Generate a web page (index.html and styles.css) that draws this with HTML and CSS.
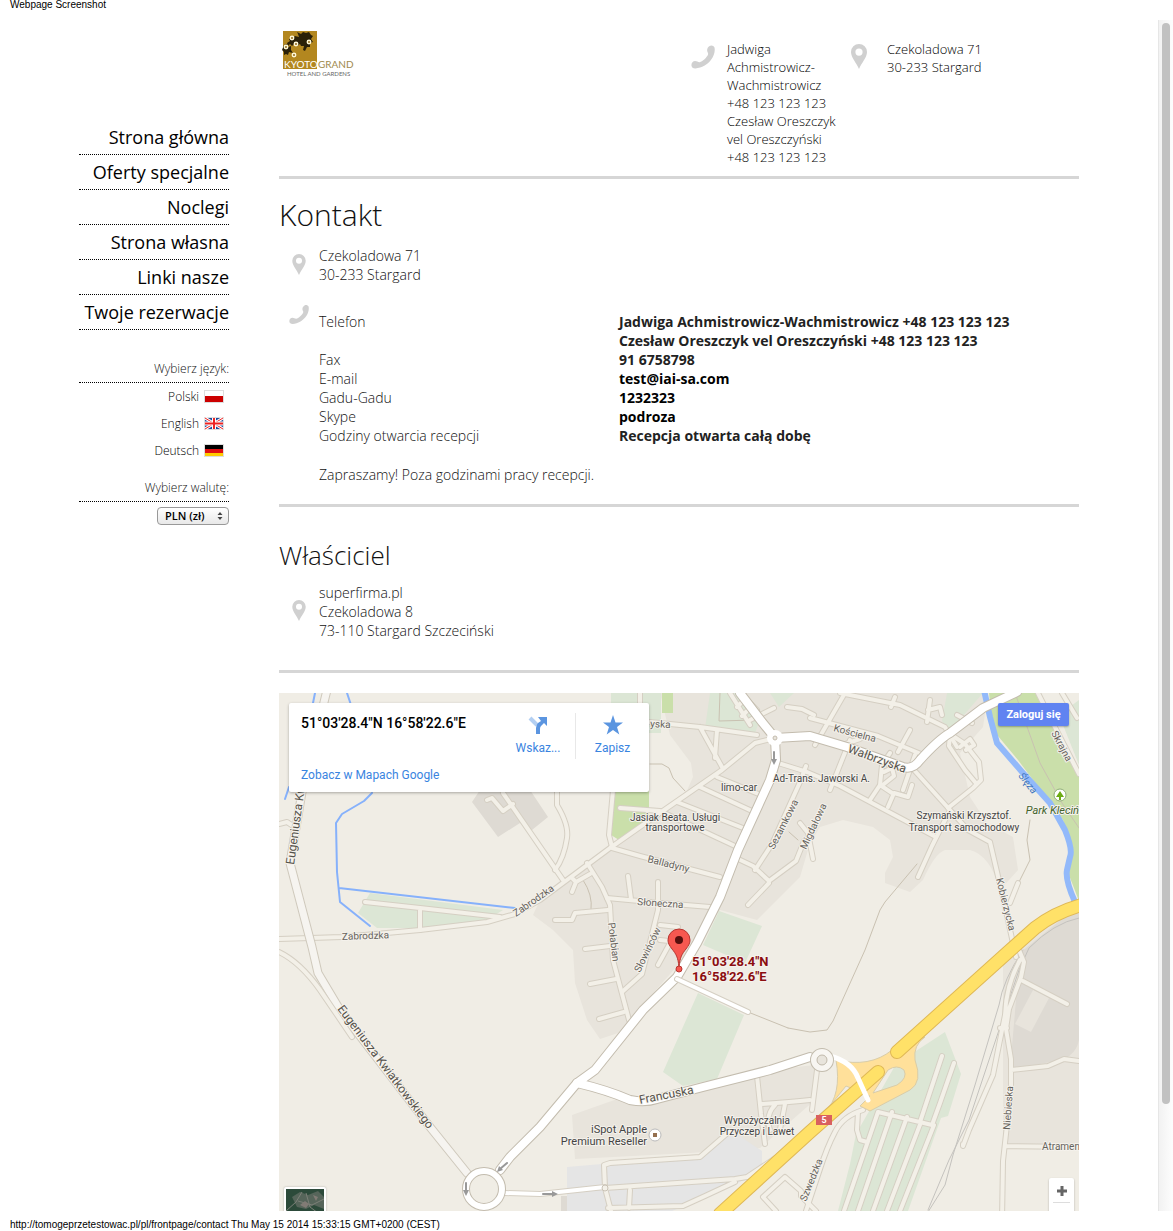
FILE: index.html
```html
<!DOCTYPE html>
<html lang="pl">

<head>
    <meta charset="utf-8">
    <title>Webpage Screenshot</title>
    <link rel="stylesheet" href="styles.css">
</head>

<body>
    <svg class="sprites" width="0" height="0">
        <symbol id="icon-phone" viewBox="0 0 24 24">
            <path d="M18.6 1.1c1.4-1.2 4.2-.5 4.9 1.400.8 3.500-.3 8.500-3.600 12.600-3.500 4.500-9 7.900-15.400 8.400-2.200.1-4.100-1.200-4.100-3.300 0-2.400 1.600-4.100 3.700-4.200 1.900 0 2.900 1.300 4.600 1.200 2.400-.3 7.700-5.100 8.400-7.900.3-1.400-1-2.200-1-4 0-1.700 1-3.200 2.500-4.200z" />
        </symbol>
        <symbol id="icon-pin" viewBox="0 0 16 25">
            <path fill-rule="evenodd" d="M8 0a8 8 0 0 1 8 8c0 5.500-5.500 11-8 17C5.500 19 0 13.500 0 8a8 8 0 0 1 8-8zm0 4.500a3.600 3.600 0 1 0 0 7.200 3.600 3.600 0 0 0 0-7.200z" />
        </symbol>
    </svg>

    <div class="print-title">Webpage Screenshot</div>

    <div class="frame">
        <div class="page">
            <div class="sidebar">
                <nav class="menu">
                    <a href="#">Strona główna</a>
                    <a href="#">Oferty specjalne</a>
                    <a href="#">Noclegi</a>
                    <a href="#">Strona własna</a>
                    <a href="#">Linki nasze</a>
                    <a href="#">Twoje rezerwacje</a>
                </nav>

                <div class="side-title">Wybierz język:</div>
                <div class="langs">
                    <a href="#">Polski
                        <svg class="flag" viewBox="0 0 20 13">
                            <rect width="20" height="13" fill="#ddd" />
                            <rect x="1" y="1" width="18" height="5" fill="#fff" />
                            <rect x="1" y="6" width="18" height="6" fill="#c00" />
                        </svg>
                    </a>
                    <a href="#">English
                        <svg class="flag" viewBox="0 0 20 13">
                            <rect width="20" height="13" fill="#ddd" />
                            <rect x="1" y="1" width="18" height="11" fill="#1c4a9c" />
                            <path d="M1 1l18 11M19 1L1 12" stroke="#fff" stroke-width="3" />
                            <path d="M1 1l18 11M19 1L1 12" stroke="#e22" stroke-width="1" />
                            <path d="M10 1v11M1 6.500h18" stroke="#fff" stroke-width="4" />
                            <path d="M10 1v11M1 6.500h18" stroke="#e22" stroke-width="2" />
                        </svg>
                    </a>
                    <a href="#">Deutsch
                        <svg class="flag" viewBox="0 0 20 13">
                            <rect width="20" height="13" fill="#ddd" />
                            <rect x="1" y="1" width="18" height="4" fill="#000" />
                            <rect x="1" y="5" width="18" height="4" fill="#e01010" />
                            <rect x="1" y="9" width="18" height="3" fill="#fc0" />
                        </svg>
                    </a>
                </div>

                <label class="side-title" for="currency">Wybierz walutę:</label>
                <div class="currency">
                    <select id="currency">
                        <option>PLN (zł)</option>
                        <option>EUR (€)</option>
                    </select>
                    <svg class="arrows" viewBox="0 0 6 8">
                        <path d="M3 0l2.500 3h-5zM3 8l2.500-3h-5z" />
                    </svg>
                </div>
            </div>

            <main class="content">
                <header class="top">
                    <a href="#" class="logo">
                        <svg viewBox="0 0 76 54">
                            <rect x="4" y="1" width="34" height="38" fill="#b3871f" />
                            <g fill="#2a2008">
                                <path d="M18 2l4 2 2-2 3 1 3-1 2 3 2 1-2 3 2 3-3 1 0 4-3 0-2 4-2-1 1-4-3 0-1-2-3 2-2-3-3 3-2-2-2 2-1-3 3-2-1-2 4-1 2-2 4 1-1-3z" />
                                <path d="M5 15l3-1 1 3 3-1 0 4 2 3-4-1-1 3-2-1-2 1 0-3-2-2z" />
                            </g>
                            <g fill="#8a6414" stroke="#fff8d8" stroke-width="1.500">
                                <circle cx="13" cy="8" r="1.700" />
                                <circle cx="30" cy="12" r="1.700" />
                                <circle cx="17" cy="14" r="1.700" />
                                <circle cx="7" cy="17" r="1.700" />
                                <circle cx="15" cy="25" r="1.700" />
                            </g>
                            <text x="5" y="38" class="logo-name" fill="#fff">KYOTO</text>
                            <text x="39" y="38" class="logo-name" fill="#a08a4c">GRAND</text>
                            <text x="8" y="46" class="logo-sub">HOTEL AND GARDENS</text>
                        </svg>
                    </a>
                    <div class="top-phone">
                        <svg class="icon"><use href="#icon-phone" /></svg>
                        <div>Jadwiga Achmistrowicz-Wachmistrowicz<br>+48 123 123 123<br>Czesław Oreszczyk vel Oreszczyński<br>+48 123 123 123</div>
                    </div>
                    <div class="top-address">
                        <svg class="icon"><use href="#icon-pin" /></svg>
                        <div>Czekoladowa 71<br>30-233 Stargard</div>
                    </div>
                </header>

                <section class="contact">
                    <h1>Kontakt</h1>
                    <div class="row">
                        <svg class="icon icon-pin"><use href="#icon-pin" /></svg>
                        <div>Czekoladowa 71<br>30-233 Stargard</div>
                    </div>
                    <div class="row details">
                        <svg class="icon icon-phone"><use href="#icon-phone" /></svg>
                        <div class="details-body">
                            <table>
                                <tr>
                                    <th>Telefon</th>
                                    <td>Jadwiga Achmistrowicz-Wachmistrowicz +48 123 123 123<br>Czesław Oreszczyk vel Oreszczyński +48 123 123 123</td>
                                </tr>
                                <tr>
                                    <th>Fax</th>
                                    <td>91 6758798</td>
                                </tr>
                                <tr>
                                    <th>E-mail</th>
                                    <td><a href="#">test@iai-sa.com</a></td>
                                </tr>
                                <tr>
                                    <th>Gadu-Gadu</th>
                                    <td><a href="#">1232323</a></td>
                                </tr>
                                <tr>
                                    <th>Skype</th>
                                    <td><a href="#">podroza</a></td>
                                </tr>
                                <tr>
                                    <th>Godziny otwarcia recepcji</th>
                                    <td>Recepcja otwarta całą dobę</td>
                                </tr>
                            </table>
                            <p>Zapraszamy! Poza godzinami pracy recepcji.</p>
                        </div>
                    </div>
                </section>

                <section class="owner">
                    <h2>Właściciel</h2>
                    <div class="row">
                        <svg class="icon icon-pin"><use href="#icon-pin" /></svg>
                        <div>superfirma.pl<br>Czekoladowa 8<br>73-110 Stargard Szczeciński</div>
                    </div>
                </section>

                <div class="map">
                    <svg class="map-canvas" viewBox="279 693 800 518" preserveAspectRatio="xMinYMin slice">
                        <defs>
                            <g id="minor">
                                <path d="M279 939L342 937 420 930 487 922 515 914 540 900 610 848 657 815 722 770 755 743 775 738" />
                                <path d="M365 902L420 908 500 917M420 908V930" />
                                <path d="M487 800l5-2 11 13 10-7M503 793L563 880" />
                                <path d="M279 824l8-2 6 4" />
                                <path d="M557 790v15q12 20 10 33-3 20-12 32M613 790l-4 45 3 12" />
                                <path d="M650 722L700 727 757 735M700 727l22 40M717 730l-2 28M640 693v20" />
                                <path d="M717 777l44 18M700 787l52 24M677 802l66 26M620 808l40 3 75 35M612 848L640 856 720 877" />
                                <path d="M587 863l15 24 8 18 3 55 16 60" />
                                <path d="M590 874l-14 8-4 10M576 882l-3-3M628 876l3 23M658 882v28l-6 24-10 40-20 18M607 898l43 4 60 5M608 910l-33 3-3 7h-17M660 925l18 2M585 949l25-3M590 984l26-5M599 1019l25-7M660 940l18 2M658 965l12-22" />
                                <path d="M736 858l17 8 16 15 27-20 8-20M769 883l-21 22M755 870l17-26 28-62 6-16M775 762l32 10 33 14 94 50M800 823l8 10 5 26" />
                                <path d="M730 693l20 32M737 690l20 20M750 720l24-12M742 702l-5 5M747 711l-5 5M787 707l15 2 12 6" />
                                <path d="M840 693l60 12 45 22 12 20M895 697l-4 10M845 693l-30 52M810 718l68 18 43 18M910 730l-12 22M930 700l-3 22M928 710l12-3 2 8M957 715l15 8M830 790l20-50M842 745l18-6" />
                                <path d="M870 800l10-15 2-20 8-12M888 807l6-14 14 4 4-12M880 785l12 8M884 784l10-8-2-8-8 4M903 790l12-35M914 770l18 20 18 20 18 20 22 12 14 60 12 55M950 810l-18 36-14 31M948 808l25-20 8-8-2-18-14-18-15-10-1 12 16 24 10 12M960 747l10-8 4 6-8 5M1018 883l-8 20" />
                                <path d="M1038 693l18 36 23 45M1062 693l15 25" />
                                <path d="M1019 950l5 12-3 15-12 32-3 20 5 30v30l-8 72-1 60M1020 960q-14 25-15 55l-12 60-24 55-6 16V1144M1023 981l44 23M1011 1070l37-4 16-7 15 2M1000 1028h7M1006 1146l73 1" />
                                <path d="M844 1211L878 1112 932 1125M892 1112l-34 99M907 1117l-34 94M921 1122l-34 89M934 1125l-34 86M920 1122l22-66M932 1125l8-22 14-40M863 1110q-20 6-28 22-8 15-16 40l-13 39M858 1112l-1 18 3 10 7 2" />
                                <path d="M757 1076l4 38 4 30M605 1188l-1-23 6-2 90-6 30-26M605 1188l130-9 12-2 30-20 55-50M735 1182l-30 14-22 10-75 2M605 1188l6 23M630 1190l-1 18M762 1104q30-2 48-4M770 1130q-5-15 5-25M785 1104l-5 25M817 1070l-5 40" />
                                <path d="M816 1211l-15-15 0-5-16-14-22 20 13 14" />
                            </g>
                            <g id="mid">
                                <path d="M327 690L302 792 290 863 312 947 318 973 340 1010 430 1127 467 1173" />
                            </g>
                            <g id="major">
                                <path d="M740 693L762 722 775 738 810 736 847 747 903 767Q913 770 920 760 938 740 950 733L983 708 1017 692" />
                                <path d="M775 738l1 22-6 20-32 70-18 47-23 46-20 34-34 33-48 60-18 13-37 44-30 30-10 13" />
                                <path d="M577 1083q30 7 53 17 15 3 27-1l46-12 67-17 40-13" />
                            </g>
                        </defs>

                        <rect class="land" x="279" y="693" width="800" height="518" />
                        <path class="urban" d="M660 693L670 735 691 763 693 777 685 795 610 848 540 900 533 915 553 930 573 950 575 983 587 1020 600 1039 618 1033 678 965 720 910 757 920 800 877 810 843 820 827 843 820 873 827 890 840 893 857 885 873 885 883 910 892 923 880Q935 853 945 850H970Q990 855 1000 890L1018 870 1013 837 987 823 970 797 960 753 983 727 988 693z" />
                        <path class="urban" d="M572 1115L620 1098 657 1100 770 1070 815 1065 815 1100 760 1148 690 1153 575 1159zM1003 950L1079 905V1147H1003z" />
                        <path class="block" d="M472 802L498 837 520 823 532 830 548 817 530 790H480zM1010 1070L1020 953 1079 905V1040Q1075 1060 1050 1062zM561 1211v-15h30v15z" />
                        <path class="urban" d="M1033 990l16 8-18 34-16-8z" />
                        <path class="lot" d="M567 1167l70-6 65-5 30-25 30 20v20l-30 15-60 25H567z" />
                        <path class="grass" d="M370 893L503 910 487 920 420 928 377 928 358 913zM611 693h50v40h-50zM710 693h28l20 32-3 8-50-5zM770 693h24l-15 14zM719 911l43 15-17 37-42-18zM698 993l46 22-27 64-34 7-20-14z M947 693h36l-33 38-8-10zM945 1032l16 42-13 42-7 2-33 93h-70l12-47 6-30 40-70z" />
                        <path class="grass" d="M1079 700l-20 15 20 50z" />
                        <path class="park" d="M989 693h51l39 80v128L1067 870l4-20-8-30-45-60-25-30zM615 790h34v30l-30 20-8-5zM662 693h11v20h-11z" />
                        <path class="path" d="M650 764h12l7 4 4 10 12 13M788 1028l-40-16M788 1028l22 4 17-2 6-9 32-71 15-40 5-8 32-38M1030 820l-3 20 3 20-15 30M583 880q10 15 8 30M789 832l9 8M1015 693l25 70 22 40 17 25M720 693l-1 28 35-1" />
                        <path class="rail" d="M1023 950q-20 30-24 55l-24 80-22 70-8 30-17 27M1079 918q-25 5-50 30l-10 22-30 90-20 60-20 40-21 50" />
                        <path class="water thin" d="M315 693l-2 10M289 787l-4 12M347 693l4 12M372 793L364 801 342 814 336 823 337 872 340 902 370 926M339 888L515 908" />
                        <path class="water" d="M984 690L990 717 997 743 1023 773 1050 803 1065 830Q1073 850 1070 857L1067 870Q1065 880 1075 902" />

                        <use class="minor-line" href="#minor" />
                        <use class="minor-fill" href="#minor" />
                        <use class="mid-line" href="#mid" />
                        <use class="mid-fill" href="#mid" />
                        <path class="minor-line" d="M279 952Q300 962 320 990L352 1037" />
                        <path class="minor-fill" d="M279 952Q300 962 320 990L352 1037" />
                        <path class="minor-line" d="M505 1193l35 1 65-7" />
                        <path class="white-fill" d="M505 1193l35 1 65-7" />
                        <path class="ramp" fill-rule="evenodd" d="M836 1060Q870 1068 892 1050L925 1037Q913 1045 915 1060 923 1082 910 1090L870 1111 860 1106 870 1096 846 1086 825 1112Q842 1095 836 1060zM873 1093L897 1085Q908 1078 904 1070 897 1064 888 1070z" />
                        <use class="major-line" href="#major" />
                        <use class="major-fill" href="#major" />
                        <path class="highway-line" d="M1085 904Q1055 912 1035 928L1007 953 897 1052M878 1072L810 1132 720 1214" />
                        <path class="highway-fill" d="M1085 904Q1055 912 1035 928L1007 953 897 1052M878 1072L810 1132 720 1214" />
                        <path class="white-fill wide" d="M830 1056q22 6 28 22l10 22" />
                        <path class="minor-line" d="M677 979L748 1012" />
                        <path class="white-fill" d="M677 979L748 1012" />
                        <circle class="ring-line" cx="484" cy="1189" r="18" />
                        <circle class="ring" cx="484" cy="1189" r="18" />
                        <circle class="ring-line" cx="822" cy="1060" r="8" />
                        <circle class="ring small" cx="822" cy="1060" r="8" />
                        <circle cx="822" cy="1060" r="5" fill="#e8e4dc" stroke="#c3bcae" />
                        <circle cx="775" cy="738" r="8" fill="#fff" />
                        <circle cx="775" cy="738" r="2" fill="#e8e4dc" stroke="#c3bcae" />
                        <circle cx="605" cy="1188" r="3" fill="#f3f0e8" stroke="#c9c2b5" />
                        <path class="arrow" d="M774 752v8M507 1163l-7 6M466 1183v8M543 1194h10" />
                        <path d="M774 765l-3-6h6zM497 1172l2-6 4 4zM466 1196l-3-6h6zM558 1194l-6-3v6z" fill="#999" />

                        <g class="labels">
                            <text class="md" transform="translate(294 865) rotate(-82)">Eugeniusza Kw</text>
                            <text class="md" transform="translate(337 1009) rotate(53)">Eugeniusza Kwiatkowskiego</text>
                            <text transform="translate(342 940) rotate(-2)">Zabrodzka</text>
                            <text transform="translate(516 917) rotate(-35)">Zabrodzka</text>
                            <text transform="translate(650 727) rotate(3)">yska</text>
                            <text transform="translate(833 731) rotate(15)">Kościelna</text>
                            <text class="md" transform="translate(847 752) rotate(20)">Wałbrzyska</text>
                            <text transform="translate(647 862) rotate(14)">Balladyny</text>
                            <text transform="translate(637 905) rotate(4)">Słoneczna</text>
                            <text transform="translate(608 923) rotate(83)">Połabian</text>
                            <text transform="translate(640 973) rotate(-64)">Słowińców</text>
                            <text transform="translate(774 850) rotate(-63)">Sezamkowa</text>
                            <text transform="translate(806 850) rotate(-65)">Migdałowa</text>
                            <text transform="translate(996 879) rotate(76)">Kobierzycka</text>
                            <text transform="translate(1051 733) rotate(62)">Skrajna</text>
                            <text transform="translate(1010 1130) rotate(-86)">Niebieska</text>
                            <text transform="translate(806 1202) rotate(-68)">Szwedzka</text>
                            <text class="md" transform="translate(640 1104) rotate(-11)">Francuska</text>
                            <text x="1042" y="1150">Atramen</text>
                            <text class="river" transform="translate(1018 776) rotate(52)">Ślęza</text>
                            <g class="poi">
                                <text x="773" y="782">Ad-Trans. Jaworski A.</text>
                                <text x="721" y="791">limo-car</text>
                                <text x="675" y="821" class="mid-text">Jasiak Beata. Usługi</text>
                                <text x="675" y="831" class="mid-text">transportowe</text>
                                <text x="964" y="819" class="mid-text">Szymański Krzysztof.</text>
                                <text x="964" y="831" class="mid-text">Transport samochodowy</text>
                                <text x="757" y="1124" class="mid-text">Wypożyczalnia</text>
                                <text x="757" y="1135" class="mid-text">Przyczep i Lawet</text>
                                <text x="647" y="1133" class="end-text">iSpot Apple</text>
                                <text x="647" y="1145" class="end-text">Premium Reseller</text>
                                <text x="1079" y="814" class="end-text park-name">Park Kleciń</text>
                            </g>
                        </g>

                        <circle cx="655" cy="1135" r="6" fill="#fff" stroke="#bbb" />
                        <rect x="653" y="1133" width="4" height="4" fill="#94704f" />
                        <circle cx="1060" cy="795" r="6" fill="#fff" stroke="#8fae76" />
                        <path d="M1060 791l4 6h-3v3h-2v-3h-3z" fill="#6cab14" />
                        <rect x="816" y="1115" width="16" height="10" fill="#d9605f" />
                        <text class="shield" x="824" y="1123">5</text>

                        <path class="marker" d="M679 967c-1-10-3-13-7-18-3-4-4-6-4-9a11 11 0 0 1 22 0c0 3-1 5-4 9-4 5-6 8-7 18z" />
                        <circle cx="679" cy="940" r="4" fill="#560f0d" />
                        <circle class="marker" cx="679" cy="969" r="3" />
                        <text class="coords" x="692" y="966">51°03'28.4"N</text>
                        <text class="coords" x="692" y="981">16°58'22.6"E</text>
                    </svg>

                    <div class="card">
                        <div class="card-info">
                            <strong>51°03'28.4"N 16°58'22.6"E</strong>
                            <a href="#">Zobacz w Mapach Google</a>
                        </div>
                        <a href="#" class="card-action">
                            <svg viewBox="0 0 22 22">
                                <path d="M3 4l7 7" stroke="#b3cff2" stroke-width="4" />
                                <path d="M9 20v-6q0-3 2-5l3-2-3-4h9v9l-3-3-3 3q-1 1-1 3v5z" fill="#5b95e0" />
                            </svg>
                            Wskaz...
                        </a>
                        <a href="#" class="card-action save">
                            <svg viewBox="0 0 22 22">
                                <path d="M11 1l2.500 7.500H21l-6 4.500 2.300 7.500L11 16l-6.300 4.500L7 13 1 8.500h7.500z" fill="#5b95e0" />
                            </svg>
                            Zapisz
                        </a>
                    </div>
                    <button class="login">Zaloguj się</button>
                    <button class="zoom-in" aria-label="Powiększ">
                        <svg viewBox="0 0 10 10"><path d="M5 0v10M0 5h10" stroke="#666" stroke-width="3" /></svg>
                    </button>
                    <button class="satellite" aria-label="Satelita">
                        <svg viewBox="0 0 38 38">
                            <rect width="38" height="38" fill="#2c4a3a" />
                            <path d="M6 8l8-5 8 3 10-4 6 6v12l-10-4-8 4-9-2z" fill="#56655a" />
                            <path d="M0 22l10-9 6-10M12 12l14 4 12-6M20 4l4 14 8 6" stroke="#7c8078" fill="none" />
                            <path d="M14 16l5-4 4 3-3 4zM27 6l5 2-2 4z" fill="#817b75" />
                        </svg>
                    </button>
                </div>
            </main>
        </div>

        <div class="scrollbar">
            <div class="thumb"></div>
        </div>
    </div>

    <div class="print-url">http://tomogeprzetestowac.pl/pl/frontpage/contact Thu May 15 2014 15:33:15 GMT+0200 (CEST)</div>
</body>

</html>
```
FILE: styles.css
```css
* {
    box-sizing: border-box;
}

body {
    margin: 0;
    background: #fff;
    color: #111;
    font: 300 14px/19px "Open Sans", sans-serif;
}

a {
    color: #000;
    text-decoration: none;
}

.sprites {
    display: block;
}

.print-title,
.print-url {
    height: 20px;
    padding-left: 10px;
    color: #000;
    font: 10px/20px "Liberation Sans", Arial, sans-serif;
}

.print-title {
    line-height: 10px;
}

.print-url {
    padding-top: 4px;
}

.frame {
    display: flex;
}

.page {
    flex: 1;
    display: flex;
    gap: 50px;
    max-width: 1000px;
    margin: 0 auto;
}

/* sidebar */

.sidebar {
    width: 150px;
    flex-shrink: 0;
    padding-top: 100px;
    text-align: right;
}

.menu a {
    display: block;
    height: 35px;
    border-bottom: 1px dotted #000;
    font-size: 18px;
    font-weight: 400;
    line-height: 34px;
}

.side-title {
    display: block;
    margin-top: 24px;
    height: 29px;
    border-bottom: 1px dotted #000;
    font-size: 12px;
    line-height: 29px;
}

.langs a {
    display: flex;
    align-items: center;
    justify-content: flex-end;
    gap: 5px;
    height: 27px;
    padding-right: 5px;
    font-size: 12px;
}

.langs + .side-title {
    margin-top: 9px;
}

.flag {
    width: 20px;
    height: 13px;
}

.currency {
    position: relative;
    margin-top: 5px;
}

.currency select {
    display: block;
    margin-left: auto;
    width: 72px;
    height: 18px;
    padding: 0 7px;
    appearance: none;
    border: 1px solid #999;
    border-radius: 4px;
    background: linear-gradient(#fff, #e8e8e8);
    color: #000;
    font: 600 11px/16px "Open Sans", sans-serif;
}

.arrows {
    position: absolute;
    top: 5px;
    right: 6px;
    width: 6px;
    height: 8px;
    fill: #444;
    pointer-events: none;
}

/* header */

.content {
    flex: 1;
    min-width: 0;
}

.top {
    display: flex;
    min-height: 159px;
    padding: 20px 0 10px;
    border-bottom: 3px solid #d6d6d6;
    color: #000;
    font-size: 13px;
    line-height: 18px;
}

.icon {
    flex-shrink: 0;
    fill: #d0d0d0;
}

.logo {
    margin-top: -10px;
    margin-right: auto;
}

.logo svg {
    width: 76px;
    height: 54px;
}

.logo-name {
    font: 10px Lato, sans-serif;
}

.logo-sub {
    font: 6px Lato, sans-serif;
    fill: #666;
}

.top-phone,
.top-address {
    display: flex;
}

.top-phone {
    width: 160px;
    gap: 12px;
}

.top-phone .icon {
    width: 24px;
    height: 24px;
    margin-top: 5px;
}

.top-phone div {
    width: 110px;
}

.top-address {
    width: 228px;
    gap: 20px;
}

.top-address .icon {
    width: 16px;
    height: 25px;
    margin-top: 4px;
}

/* sections */

.contact,
.owner {
    border-bottom: 3px solid #d6d6d6;
}

.contact {
    padding: 16px 0 20px;
}

h1,
h2 {
    margin: 0;
    font-weight: 300;
    line-height: 40px;
}

h1 {
    font-size: 30px;
}

h2 {
    font-size: 26px;
}

.contact h1 {
    margin-bottom: 11px;
}

.row {
    display: flex;
    align-items: flex-start;
    padding-left: 10px;
}

.row .icon {
    width: 20px;
    height: 21px;
    margin-right: 10px;
}

.row .icon-pin {
    margin-top: 8px;
}

.details {
    margin-top: 20px;
}

.details-body {
    flex: 1;
    padding-top: 8px;
}

table {
    width: 100%;
    border-collapse: collapse;
}

th,
td {
    padding: 0;
    text-align: left;
    vertical-align: top;
}

th {
    width: 300px;
    font-weight: 300;
}

td {
    font-weight: 700;
    color: #222;
}

.details p {
    margin: 20px 0 0;
}

.owner {
    padding: 28px 0 30px;
}

.owner h2 {
    margin-bottom: 8px;
}

.owner .icon-pin {
    margin-top: 17px;
}

/* map */

.map {
    position: relative;
    height: 518px;
    margin-top: 20px;
    overflow: hidden;
    background: #f0ede5;
    font-family: Roboto, sans-serif;
}

.map-canvas {
    display: block;
    width: 100%;
    height: 100%;
}

.land { fill: #f0ede5; }
.urban { fill: #e8e4dc; }
.block { fill: #dedad3; }
.lot { fill: #e5e5e5; }
.grass { fill: #dce6d5; }
.park { fill: #cadfaa; }

.path,
.rail,
.water,
.minor-line,
.minor-fill,
.mid-line,
.mid-fill,
.major-line,
.major-fill,
.highway-line,
.highway-fill,
.white-fill,
.ring,
.ring-line,
.arrow {
    fill: none;
    stroke-linecap: round;
    stroke-linejoin: round;
}

.path { stroke: #c9c1b1; stroke-width: 1; }
.rail { stroke: #c4c2be; stroke-width: 1; }
.water { stroke: #92b9fa; stroke-width: 6; }
.water.thin { stroke: #86b1fb; stroke-width: 2; }
.minor-line { stroke: #d5cfc3; stroke-width: 6; }
.minor-fill { stroke: #f3f0e8; stroke-width: 4; }
.mid-line { stroke: #cfc9bc; stroke-width: 9; }
.mid-fill { stroke: #f6f4f0; stroke-width: 7; }
.major-line { stroke: #c3bcae; stroke-width: 10; }
.major-fill { stroke: #fff; stroke-width: 8; }
.white-fill { stroke: #fff; stroke-width: 4; }
.white-fill.wide { stroke-width: 5; }
.highway-line { stroke: #dfb856; stroke-width: 14; }
.highway-fill { stroke: #ffe168; stroke-width: 12; }
.ramp { fill: #ffe09a; stroke: #d9cda9; }
.ring-line { stroke: #c3bcae; stroke-width: 8; }
.ring { stroke: #fff; stroke-width: 6; }
.ring.small { stroke: #f8f6f2; }
.arrow { stroke: #999; stroke-width: 2; }

.labels text {
    font-size: 10px;
    font-weight: 400;
    fill: #66635c;
    stroke: #f5f2ec;
    stroke-width: 2px;
    stroke-linejoin: round;
    paint-order: stroke;
}

.labels .md {
    font-size: 12px;
    fill: #55524b;
}

.labels .poi text {
    fill: #444;
}

.labels .mid-text {
    text-anchor: middle;
}

.labels .poi .end-text {
    text-anchor: end;
    font-size: 11px;
}

.labels .poi .park-name {
    font-style: italic;
    fill: #44632c;
}

.labels .river {
    font-style: italic;
    fill: #4377bd;
    stroke: none;
}

.shield {
    font-size: 9px;
    font-weight: 700;
    fill: #fff;
    text-anchor: middle;
}

.marker {
    fill: #f75850;
    stroke: #b63530;
}

.coords {
    font-size: 13px;
    font-weight: 700;
    fill: #8b0d10;
    stroke: #f5f2ec;
    stroke-width: 2px;
    paint-order: stroke;
}

.card {
    position: absolute;
    top: 10px;
    left: 10px;
    display: flex;
    width: 360px;
    height: 89px;
    padding: 10px 0 8px;
    border-radius: 2px;
    background: #fff;
    box-shadow: 0 1px 3px rgba(0, 0, 0, 0.3);
    font-size: 12px;
    font-weight: 400;
}

.card a {
    color: #3a84df;
}

.card-info {
    flex: 1;
    display: flex;
    flex-direction: column;
    justify-content: space-between;
    padding-left: 12px;
    line-height: 18px;
}

.card-info strong {
    color: #000;
    font-size: 14px;
    font-weight: 500;
    line-height: 20px;
}

.card-action {
    width: 74px;
    height: 46px;
    padding-top: 1px;
    text-align: center;
    line-height: 24px;
}

.card-action.save {
    border-left: 1px solid #e8e8e8;
}

.card-action svg {
    display: block;
    width: 22px;
    height: 22px;
    margin: 0 auto;
}

.login {
    position: absolute;
    top: 10px;
    right: 10px;
    width: 71px;
    height: 23px;
    padding: 0;
    border: 0;
    border-radius: 2px;
    background: #6083f1;
    box-shadow: 0 1px 2px rgba(0, 0, 0, 0.3);
    color: #fff;
    font: 700 11px/23px Roboto, sans-serif;
}

.zoom-in {
    position: absolute;
    right: 5px;
    bottom: -26px;
    width: 25px;
    height: 59px;
    padding: 0 0 33px;
    border: 0;
    border-radius: 2px;
    background: linear-gradient(#ddd, #ddd) center 24px / 17px 1px no-repeat #fff;
    box-shadow: 0 1px 2px rgba(0, 0, 0, 0.3);
}

.zoom-in svg {
    display: block;
    width: 10px;
    height: 10px;
    margin: 0 auto;
}

.satellite {
    position: absolute;
    left: 5px;
    bottom: -18px;
    width: 42px;
    height: 42px;
    padding: 2px;
    border: 0;
    border-radius: 2px;
    background: #fff;
    box-shadow: 0 0 2px rgba(0, 0, 0, 0.3);
}

.satellite svg {
    display: block;
}

/* scroll track on the right edge */

.scrollbar {
    width: 15px;
    padding: 3px 3px 0;
    border-left: 1px solid #e6e6e6;
    background: linear-gradient(to right, #f2f2f2, #fdfdfd);
}

.thumb {
    width: 8px;
    height: 91%;
    border-radius: 4px;
    background: #c1c1c1;
}
```
